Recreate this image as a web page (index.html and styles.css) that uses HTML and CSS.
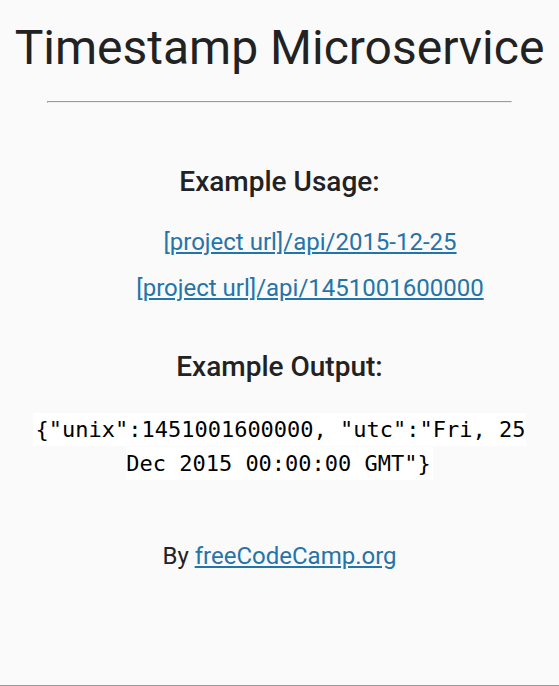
FILE: index.html
```html
<!DOCTYPE html>
<html lang="en">
<head>
<meta charset="utf-8">
<title>Timestamp Microservice</title>
<link rel="stylesheet" href="styles.css">
</head>
<body>
<h1 class="title">Timestamp Microservice</h1>
<hr class="rule">
<div class="container">
  <h3 class="heading heading-usage">Example Usage:</h3>
  <ul class="links">
    <li class="link-item"><a class="link" href="#">[project url]/api/2015-12-25</a></li>
    <li class="link-item"><a class="link" href="#">[project url]/api/1451001600000</a></li>
  </ul>
  <h3 class="heading heading-output">Example Output:</h3>
  <p class="output"><code class="code">{"unix":1451001600000, "utc":"Fri, 25 Dec 2015 00:00:00 GMT"}</code></p>
</div>
<div class="footer">
  <p class="byline">By <a class="link" href="#">freeCodeCamp.org</a></p>
</div>
</body>
</html>
```
FILE: styles.css
```css
html {
  min-height: 100%;
  box-sizing: border-box;
  background-color: #fafafa;
  border-bottom: 1px solid #999;
}

body {
  margin: 0;
  padding: 0 8px;
  font-family: Roboto, "Liberation Sans", sans-serif;
  font-size: 24px;
  color: #222;
  text-align: center;
  line-height: 33.6px;
}

.title {
  font-size: 48px;
  font-weight: 400;
  margin: 31px 0 0;
}

.rule {
  margin: 36px 39px 0;
}

.container {
  margin: 0;
}

.heading {
  font-size: 28px;
  font-weight: 500;
  margin: 0;
}

.heading-usage {
  margin-top: 62px;
}

.heading-output {
  margin-top: 45px;
}

.links {
  list-style: none;
  margin: 28px 0 0;
  padding: 0 0 0 61px;
}

.link-item {
  margin-bottom: 12px;
}

.link-item:last-child {
  margin-bottom: 0;
}

.link {
  color: #2574a9;
}

.output {
  margin: 29px 0 0;
}

.code {
  font-family: "DejaVu Sans Mono", monospace;
  font-size: 22px;
  padding: 4px 2px;
  color: #000;
  background-color: #fff;
}

.footer {
  margin-top: 60px;
}

.byline {
  margin: 0;
}
```
